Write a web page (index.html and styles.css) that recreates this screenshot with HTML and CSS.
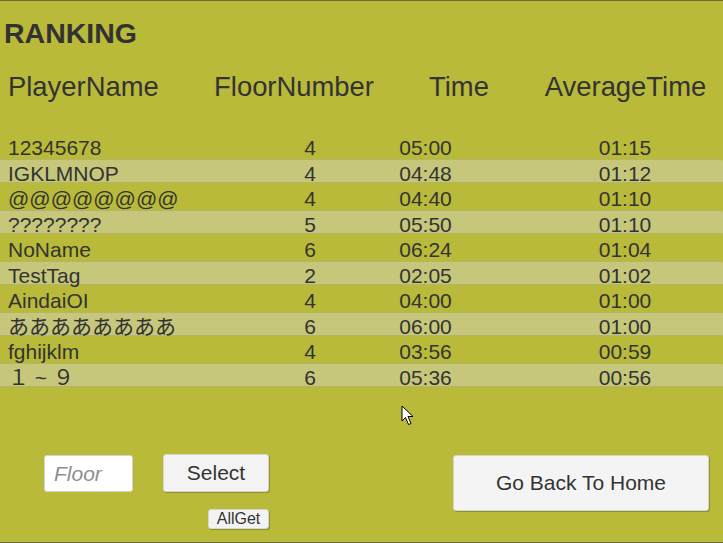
FILE: index.html
```html
<!DOCTYPE html>
<html lang="ja">
<head>
<meta charset="utf-8">
<title>Ranking</title>
<link rel="stylesheet" href="styles.css">
</head>
<body>
<div class="screen">
  <h1 class="title">RANKING</h1>
  <div class="head">
    <div class="h-name">PlayerName</div>
    <div class="h-col">FloorNumber</div>
    <div class="h-col">Time</div>
    <div class="h-col">AverageTime</div>
  </div>
  <div class="rows">
    <div class="row"><span class="name">12345678</span><span class="c">4</span><span class="c">05:00</span><span class="c avg">01:15</span></div>
    <div class="row alt"><span class="name">IGKLMNOP</span><span class="c">4</span><span class="c">04:48</span><span class="c avg">01:12</span></div>
    <div class="row"><span class="name">@@@@@@@@</span><span class="c">4</span><span class="c">04:40</span><span class="c avg">01:10</span></div>
    <div class="row alt"><span class="name">????????</span><span class="c">5</span><span class="c">05:50</span><span class="c avg">01:10</span></div>
    <div class="row"><span class="name">NoName</span><span class="c">6</span><span class="c">06:24</span><span class="c avg">01:04</span></div>
    <div class="row alt"><span class="name">TestTag</span><span class="c">2</span><span class="c">02:05</span><span class="c avg">01:02</span></div>
    <div class="row"><span class="name">AindaiOI</span><span class="c">4</span><span class="c">04:00</span><span class="c avg">01:00</span></div>
    <div class="row alt"><span class="name">ああああああああ</span><span class="c">6</span><span class="c">06:00</span><span class="c avg">01:00</span></div>
    <div class="row"><span class="name">fghijklm</span><span class="c">4</span><span class="c">03:56</span><span class="c avg">00:59</span></div>
    <div class="row alt"><span class="name">１ ~ ９</span><span class="c">6</span><span class="c">05:36</span><span class="c avg">00:56</span></div>
  </div>
  <div class="controls">
    <div class="left">
      <input class="floor" type="text" placeholder="Floor">
      <button class="btn select">Select</button>
      <button class="btn allget">AllGet</button>
    </div>
    <button class="btn home">Go Back To Home</button>
  </div>
  <svg class="cursor" width="14" height="21" viewBox="0 0 14 21"><path d="M1 1 L1 16 L4.5 12.5 L7.5 19.5 L10 18.5 L7 11.5 L12 11.5 Z" fill="#fff" stroke="#000" stroke-width="1" stroke-linejoin="miter"/></svg>
</div>
</body>
</html>
```
FILE: styles.css
```css
* { box-sizing: border-box; }
html, body { margin: 0; padding: 0; background: #b9ba3a; }
.screen {
  position: relative;
  width: 723px;
  height: 543px;
  overflow: hidden;
  background: #b9ba3a;
  border-top: 1px solid #6c6c3a;
  border-bottom: 1px solid #6c6c3a;
  font-family: "Liberation Sans", Arial, "Noto Sans CJK JP", sans-serif;
  color: #333333;
}
.title {
  margin: 0;
  padding: 18px 0 0 4px;
  font-size: 28.5px;
  line-height: 28.5px;
  font-weight: bold;
  color: #323232;
}
.head {
  display: grid;
  grid-template-columns: 200px 188px 142px 1fr;
  margin-top: 24.5px;
  height: 30px;
  font-size: 27.4px;
  line-height: 30px;
}
.h-name { padding-left: 8px; white-space: nowrap; }
.h-col { text-align: center; white-space: nowrap; }
.h-col:last-child { padding-right: 2px; }
.rows { margin-top: 31.5px; }
.row {
  display: grid;
  grid-template-columns: 260px 100px 131px 1fr;
  height: 25.5px;
  padding-top: 1.5px;
  font-size: 21px;
  line-height: 25.5px;
  white-space: nowrap;
}
.row.alt {
  background: linear-gradient(to bottom, #b4b56c 0, #b4b56c 1px, #c6c77b 1px, #c6c77b 23px, #b4b56c 23px, #b4b56c 24px, transparent 24px);
  border-radius: 0 3px 3px 0;
}
.name { padding-left: 8px; }
.c { text-align: center; }
.c.avg { padding-left: 36px; }
.controls {
  display: flex;
  justify-content: space-between;
  align-items: flex-start;
  margin-top: 65.5px;
  padding: 0 14px 0 44px;
}
.left {
  display: grid;
  grid-template-columns: 89px 106px;
  grid-template-rows: 38px 20px;
  column-gap: 30px;
  row-gap: 17px;
}
.floor {
  align-self: center;
  width: 89px;
  height: 37px;
  margin: 1px 0 0 0;
  padding: 0 0 0 9px;
  border: 1px solid #d4d4d4;
  border-radius: 3px;
  background: #ffffff;
  font-family: "Liberation Sans", Arial, sans-serif;
  font-size: 21px;
  color: #333;
  outline: none;
}
.floor::placeholder { color: #8e8e8e; font-style: italic; }
.btn {
  margin: 0;
  padding: 0;
  border: 1px solid #d6d6cc;
  border-radius: 3px;
  background: #f3f3f3;
  color: #333333;
  font-family: "Liberation Sans", Arial, sans-serif;
  box-shadow: 1px 1px 0 rgba(70, 70, 30, 0.35);
  cursor: default;
}
.select {
  width: 106px;
  height: 38px;
  font-size: 21px;
}
.allget {
  grid-column: 2;
  justify-self: end;
  width: 61px;
  height: 20px;
  font-size: 16px;
  line-height: 18px;
}
.home {
  width: 256px;
  height: 56px;
  margin-top: 1px;
  font-size: 21px;
  background: #f4f4f4;
}
.cursor {
  position: absolute;
  left: 401px;
  top: 404px;
}
```
